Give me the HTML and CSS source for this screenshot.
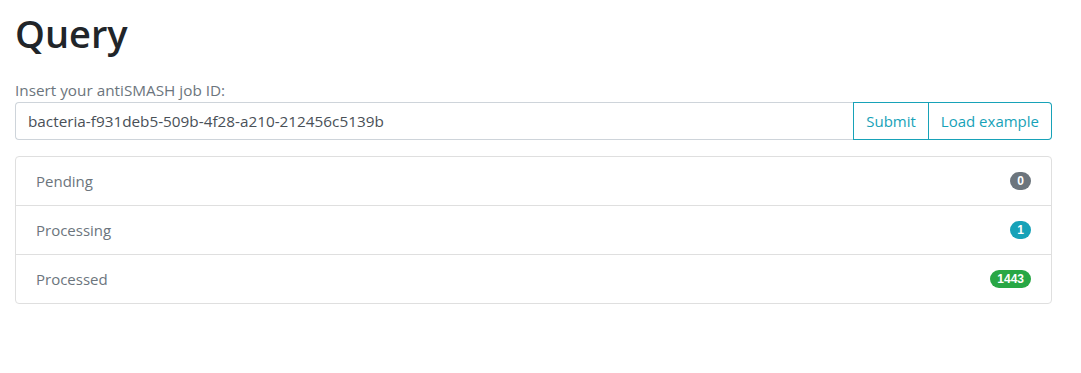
FILE: index.html
```html
<!DOCTYPE html>
<html lang="en">
<head>
  <meta charset="UTF-8">
  <title>Query</title>
  <link rel="stylesheet" href="styles.css">
</head>
<body>
  <div class="container">
    <h1>Query</h1>

    <form class="query-form">
      <label for="jobId">Insert your antiSMASH job ID:</label>
      <div class="input-group">
        <input type="text" id="jobId" value="bacteria-f931deb5-509b-4f28-a210-212456c5139b">
        <button type="submit" class="btn">Submit</button>
        <button type="button" class="btn btn-last">Load example</button>
      </div>
    </form>

    <ul class="list-group">
      <li class="list-item">
        <span>Pending</span>
        <span class="badge badge-secondary">0</span>
      </li>
      <li class="list-item">
        <span>Processing</span>
        <span class="badge badge-info">1</span>
      </li>
      <li class="list-item">
        <span>Processed</span>
        <span class="badge badge-success">1443</span>
      </li>
    </ul>
  </div>
</body>
</html>
```

FILE: styles.css
```css
body {
  margin: 0;
  font-family: "Open Sans", Arial, sans-serif;
  font-size: 16px;
  line-height: 24px;
  color: #212529;
  background: #fff;
}

.container {
  width: 1037px;
  padding: 10px 0 0 15px;
}

h1 {
  margin: 0 0 22px;
  font-size: 38px;
  line-height: 46px;
  font-weight: 600;
  color: #212529;
}

label {
  display: block;
  color: #6c757d;
  font-size: 15.3px;
}

.input-group {
  display: flex;
  height: 38px;
}

.input-group input {
  flex: 1;
  min-width: 0;
  box-sizing: border-box;
  height: 38px;
  padding: 6px 12px;
  border: 1px solid #ced4da;
  border-right: none;
  border-radius: 4px 0 0 4px;
  font-family: inherit;
  font-size: 15.3px;
  color: #495057;
  outline: none;
}

.btn {
  box-sizing: border-box;
  height: 38px;
  padding: 6px 12px;
  border: 1px solid #17a2b8;
  background: #fff;
  color: #17a2b8;
  font-family: inherit;
  font-size: 15px;
  cursor: pointer;
}

.btn + .btn {
  border-left: none;
}

.btn-last {
  border-radius: 0 4px 4px 0;
}

.btn:hover {
  background: #17a2b8;
  color: #fff;
}

.list-group {
  list-style: none;
  margin: 16px 0 0;
  padding: 0;
  border: 1px solid #dfdfdf;
  border-radius: 4px;
}

.list-item {
  display: flex;
  justify-content: space-between;
  align-items: center;
  padding: 12px 20px;
  color: #6c757d;
  font-size: 15px;
}

.list-item + .list-item {
  border-top: 1px solid #dfdfdf;
}

.badge {
  display: inline-block;
  padding: 2px 7px;
  border-radius: 10px;
  font-family: "Liberation Sans", Arial, sans-serif;
  font-size: 12px;
  font-weight: bold;
  line-height: 14px;
  color: #fff;
}

.badge-secondary { background: #6c757d; }
.badge-info { background: #17a2b8; }
.badge-success { background: #28a745; }
```
